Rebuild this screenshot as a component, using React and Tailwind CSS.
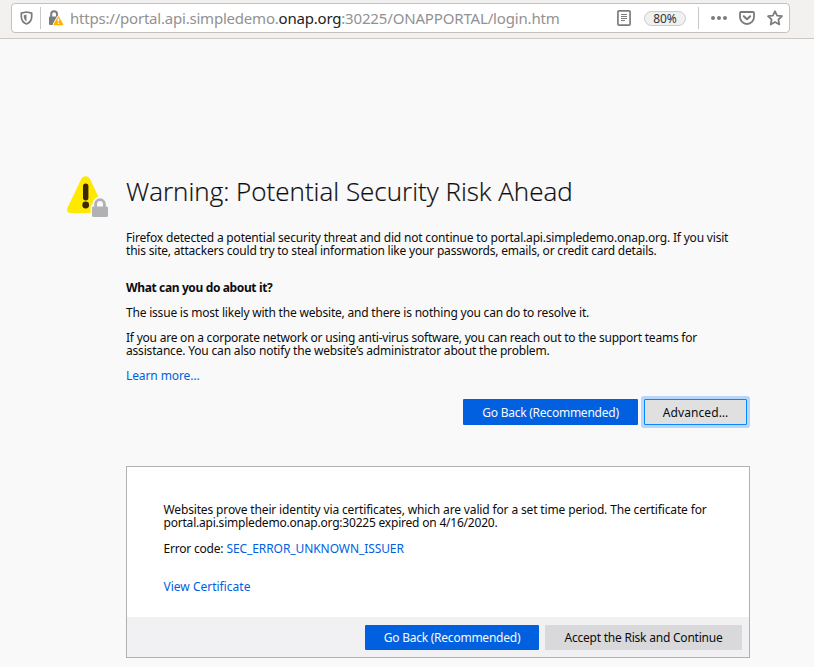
const link = 'text-[#0060df]';
const primary =
  'flex shrink-0 items-center justify-center whitespace-nowrap rounded-[1px] bg-[#0060df] tracking-[-0.24px] text-[#f9f9fa]';

function ShieldIcon() {
  return (
    <svg className="h-[14px] w-[13px] shrink-0" viewBox="0 0 13 14" fill="none">
      <path d="M6.5 1 11.7 2.2V5.5C11.7 9 10 11.6 6.5 13 3 11.6 1.3 9 1.3 5.5V2.2Z" stroke="#7c7c7c" strokeWidth="1.7" strokeLinejoin="round" />
      <path d="M6.5 3.6V10.4C4.7 9.2 3.8 7.7 3.8 5.5V4.2Z" fill="#7c7c7c" />
    </svg>
  );
}

function InsecureLockIcon() {
  return (
    <svg className="h-[16px] w-[16px] shrink-0" viewBox="0 0 16 16" fill="none">
      <path d="M3.2 7.5V4.2a2.9 2.9 0 0 1 5.8 0V7.5" stroke="#7c7c7c" strokeWidth="2" />
      <rect x="1" y="6.6" width="10" height="8.4" rx="1" fill="#7c7c7c" />
      <path d="M10.4 7 14.6 14.6H6.2Z" stroke="#fff" strokeWidth="3" strokeLinejoin="round" />
      <path d="M10.4 7 14.6 14.6H6.2Z" fill="#ffb000" stroke="#ffb000" strokeWidth="1.4" strokeLinejoin="round" />
      <path d="M10.4 8.4v3.2M10.4 12.7v1.3" stroke="#fff" strokeWidth="1.3" />
    </svg>
  );
}

function ReaderIcon() {
  return (
    <svg className="h-[16px] w-[14px] shrink-0" viewBox="0 0 14 16" fill="none" stroke="#7c7c7c">
      <rect x="0.9" y="0.9" width="12.2" height="14.2" rx="1.2" strokeWidth="1.7" />
      <path d="M4 4.5h6M4 6.5h6M4 8.5h6M4 10.5h4" />
    </svg>
  );
}

function PocketIcon() {
  return (
    <svg className="h-[14px] w-[16px] shrink-0" viewBox="0 0 16 14" fill="none" stroke="#7c7c7c" strokeLinecap="round" strokeLinejoin="round">
      <path d="M2 1h12a1 1 0 0 1 1 1v4a7 7 0 0 1-14 0V2a1 1 0 0 1 1-1Z" strokeWidth="1.8" />
      <path d="m4.8 5.3 3.2 3 3.2-3" strokeWidth="2" />
    </svg>
  );
}

function StarIcon() {
  return (
    <svg className="h-[16px] w-[16px] shrink-0" viewBox="0 0 16 16" fill="none">
      <path d="m8 1.2 2.1 4.4 4.9.6-3.6 3.3.9 5L8 12.1l-4.3 2.4.9-5L1 6.2l4.9-.6Z" stroke="#7c7c7c" strokeWidth="1.7" strokeLinejoin="round" />
    </svg>
  );
}

function WarningIcon() {
  return (
    <svg className="h-[42px] w-[42px] shrink-0" viewBox="0 0 42 42" fill="none">
      <path d="M14.5 2.6C16.2-.5 21-.5 22.8 2.6L36.3 31.2C37.8 34.2 36 37 32.8 37H3.5C.8 37 -.7 34.4.6 31.6Z" fill="#ffe900" />
      <path d="M18.7 10.3v11.5" stroke="#3e2800" strokeWidth="5.4" strokeLinecap="round" />
      <circle cx="18.7" cy="29" r="3.4" fill="#3e2800" />
      <path d="M23.6 31c0-1.5.6-2.4 1.8-2.8V28a7.6 7.6 0 0 1 15.2 0v14h-17Z" fill="#f9f9fa" />
      <path d="M28.6 32V28a4.4 4.4 0 0 1 8.8 0V32" stroke="#b1b1b3" strokeWidth="2.8" />
      <rect x="25" y="30.5" width="16" height="10.5" rx="1.5" fill="#b1b1b3" />
    </svg>
  );
}

function AddressBar() {
  return (
    <header className="flex h-[39px] items-start border-b border-[#cdc7c2] bg-[#f2f1f0] pl-[11px] pt-[3px]">
      <div className="flex h-[30px] w-[779px] items-center rounded-[4px] border border-[#c4c1be] bg-white pl-2">
        <ShieldIcon />
        <div className="ml-[7px] h-[22px] w-px bg-[#c8c8c8]" />
        <div className="ml-[7px] flex"><InsecureLockIcon /></div>
        <div className="ml-[6px] flex w-[547px] whitespace-nowrap text-[15px] leading-5 tracking-[-0.21px] text-[#929292]">
          <span>https://portal.api.simpledemo.</span>
          <span className="text-[#222]">onap.org</span>
          <span className="tracking-[-0.16px]">:30225/ONAPPORTAL/login.htm</span>
        </div>
        <ReaderIcon />
        <div className="ml-[13px] flex h-[15px] w-[42px] items-center justify-center rounded-full border border-[#ccc] bg-[#f0f0f0] text-[12px] text-[#333]">80%</div>
        <div className="ml-[12px] h-[22px] w-px bg-[#c8c8c8]" />
        <div className="ml-[12px] mr-[12px] flex gap-[2px]">
          <i className="size-1 rounded-full bg-[#7c7c7c]" />
          <i className="size-1 rounded-full bg-[#7c7c7c]" />
          <i className="size-1 rounded-full bg-[#7c7c7c]" />
        </div>
        <PocketIcon />
        <div className="ml-3 flex"><StarIcon /></div>
      </div>
    </header>
  );
}

export default function App() {
  return (
    <div className="h-[667px] w-[814px] overflow-hidden bg-[#f9f9fa] font-['Noto_Sans','Open_Sans',sans-serif] text-[12px] leading-[13px] text-[#0c0c0d]">
      <AddressBar />
      <main className="flex gap-[17px] pl-[67px] pt-[137px]">
        <WarningIcon />
        <div className="w-[624px] shrink-0">
          <h1 className="-mt-px h-8 whitespace-nowrap font-['Open_Sans'] text-[26px] font-light leading-8 [-webkit-text-stroke:0.2px_#0c0c0d]">Warning: Potential Security Risk Ahead</h1>
          <div className="mt-6 whitespace-nowrap">
            <p className="tracking-[-0.185px]">Firefox detected a potential security threat and did not continue to portal.api.simpledemo.onap.org. If you visit</p>
            <p className="tracking-[-0.2px]">this site, attackers could try to steal information like your passwords, emails, or credit card details.</p>
          </div>
          <h2 className="mt-6 whitespace-nowrap font-bold tracking-[-0.37px]">What can you do about it?</h2>
          <p className="mt-3 whitespace-nowrap tracking-[-0.2px]">The issue is most likely with the website, and there is nothing you can do to resolve it.</p>
          <div className="mt-3 whitespace-nowrap">
            <p className="tracking-[-0.225px]">If you are on a corporate network or using anti-virus software, you can reach out to the support teams for</p>
            <p className="tracking-[-0.18px]">assistance. You can also notify the website’s administrator about the problem.</p>
          </div>
          <p className="mt-3 tracking-[-0.1px]"><a className={link}>Learn more…</a></p>
          <div className="mt-[17px] flex justify-end gap-[6px] pr-[3px]">
            <button className={`${primary} h-[26px] w-[175px]`}><span>Go Back (Recommended)</span></button>
            <button className="flex h-[26px] w-[103px] items-center justify-center rounded-[1px] border border-[#0a84ff] bg-[#e0e0e1] tracking-[0.1px] shadow-[0_0_0_3px_#b5d7fb]"><span>Advanced…</span></button>
          </div>
          <section className="mt-[41px] flex h-[192px] w-[624px] flex-col border border-[#b1b1b3] bg-white">
            <div className="grow whitespace-nowrap pl-[36.5px] pt-9">
              <p className="tracking-[-0.145px]">Websites prove their identity via certificates, which are valid for a set time period. The certificate for</p>
              <p className="tracking-[-0.207px]">portal.api.simpledemo.onap.org:30225 expired on 4/16/2020.</p>
              <p className="mt-[13px] flex gap-[3px]"><span className="tracking-[-0.2px]">Error code:</span><a className={`${link} tracking-[-0.08px]`}>SEC_ERROR_UNKNOWN_ISSUER</a></p>
              <p className="mt-[25px]"><a className={link}>View Certificate</a></p>
            </div>
            <footer className="flex h-10 items-center justify-end gap-[6px] bg-[#f1f1f3] pr-[7px]">
              <button className={`${primary} h-[25px] w-[174px]`}><span>Go Back (Recommended)</span></button>
              <button className="flex h-[25px] w-[197px] items-center justify-center whitespace-nowrap rounded-[1px] bg-[#d9d9db] tracking-[-0.22px]"><span>Accept the Risk and Continue</span></button>
            </footer>
          </section>
        </div>
      </main>
    </div>
  );
}
